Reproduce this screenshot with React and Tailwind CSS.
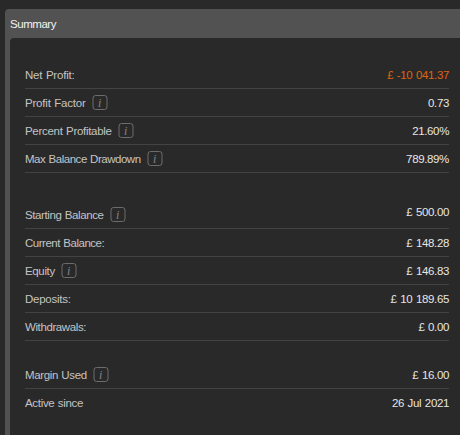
import React from "react";

const groups = [
  {
    className: "",
    rows: [
      { label: "Net Profit:", value: "£ -10 041.37", negative: true, tracking: "tracking-[-0.2px]" },
      { label: "Profit Factor", value: "0.73", info: true, tracking: "tracking-[-0.2px]" },
      { label: "Percent Profitable", value: "21.60%", info: true, tracking: "tracking-[-0.3px]" },
      { label: "Max Balance Drawdown", value: "789.89%", info: true, tracking: "tracking-[-0.48px]" },
    ],
  },
  {
    className: "mt-7",
    rows: [
      { label: "Starting Balance", value: "£ 500.00", info: true, raised: true, tracking: "tracking-[-0.4px]" },
      { label: "Current Balance:", value: "£ 148.28", tracking: "tracking-[-0.48px]" },
      { label: "Equity", value: "£ 146.83", info: true, tracking: "tracking-[-0.35px]" },
      { label: "Deposits:", value: "£ 10 189.65", tracking: "tracking-[-0.25px]" },
      { label: "Withdrawals:", value: "£ 0.00", tracking: "tracking-[-0.4px]" },
    ],
  },
  {
    className: "mt-5",
    rows: [
      { label: "Margin Used", value: "£ 16.00", info: true, tracking: "tracking-[-0.37px]" },
      { label: "Active since", value: "26 Jul 2021", last: true, tracking: "tracking-[-0.32px]" },
    ],
  },
];

function InfoIcon() {
  return (
    <svg width="16" height="16" viewBox="0 0 16 16" className="ml-[6.5px] shrink-0 tracking-normal">
      <rect x="1" y="0.5" width="14" height="14" rx="2.5" fill="none" stroke="#6c6c6c" />
      <text x="7.7" y="11.5" textAnchor="middle" fill="#858585" className="font-['Liberation_Serif',serif] text-[12px] italic">
        i
      </text>
    </svg>
  );
}

function Row({ label, value, info, negative, raised, last, tracking }) {
  return (
    <div className={`flex h-7 items-center justify-between border-b ${last ? "border-transparent" : "border-[#434343]"}`}>
      <div className="flex items-center text-[#c4c4c4] [word-spacing:0.6px]">
        <span className={tracking}>{label}</span>
        {info && <InfoIcon />}
      </div>
      <span className={`tracking-[-0.36px] [word-spacing:0.8px] ${negative ? "text-[#e0640f]" : "text-[#e6e6e6]"} ${raised ? "pb-1.5" : ""}`}>{value}</span>
    </div>
  );
}

function App() {
  return (
    <div className="flex h-screen flex-col overflow-hidden bg-[#292929] pt-[9px] pl-[5px] font-['Liberation_Sans',Arial,sans-serif] text-[11.5px] leading-[14px]">
      <div className="flex flex-1 flex-col rounded-tl bg-[#525252] pl-[5px]">
        <h2 className="flex h-[29px] items-center tracking-[-0.45px] text-[#f2f2f2]">Summary</h2>
        <div className="flex-1 rounded-tl bg-[#292929] pt-[23px] pr-[11px] pl-[15px]">
          {groups.map((group, i) => (
            <div key={i} className={group.className}>
              {group.rows.map((row) => (
                <Row key={row.label} {...row} />
              ))}
            </div>
          ))}
        </div>
      </div>
    </div>
  );
}

export default App;
